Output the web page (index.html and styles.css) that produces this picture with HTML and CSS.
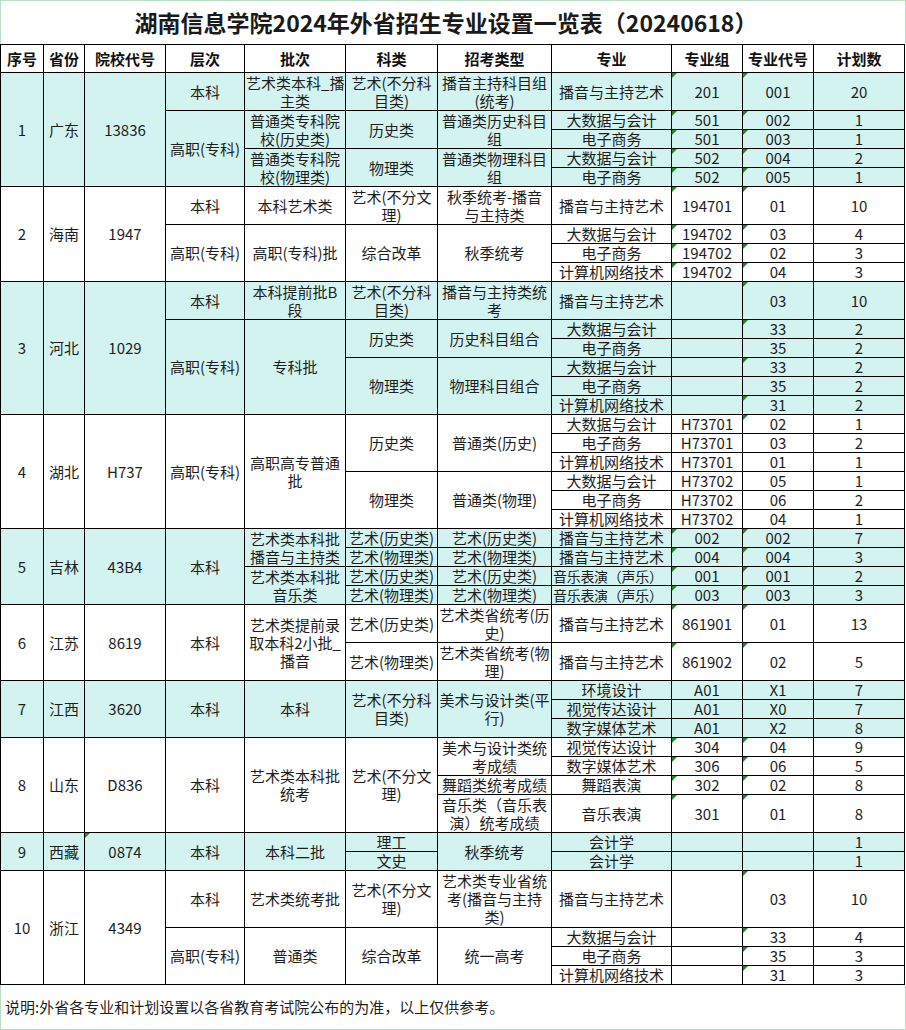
FILE: index.html
```html
<!DOCTYPE html>
<html lang="zh-CN">
<head>
<meta charset="utf-8">
<title>湖南信息学院2024年外省招生专业设置一览表</title>
<link rel="stylesheet" href="styles.css">
</head>
<body>
<div class="sheet">
  <div class="title">湖南信息学院2024年外省招生专业设置一览表（20240618）</div>
  <table class="grid">
    <colgroup>
      <col class="w43"><col class="w41"><col class="w81"><col class="w79"><col class="w101"><col class="w92"><col class="w114"><col class="w120"><col class="w71"><col class="w71"><col class="w91">
    </colgroup>
    <thead>
      <tr class="hd"><th>序号</th><th>省份</th><th>院校代号</th><th>层次</th><th>批次</th><th>科类</th><th>招考类型</th><th>专业</th><th>专业组</th><th>专业代号</th><th>计划数</th></tr>
    </thead>
    <tbody class="cy">
      <tr><td rowspan="6">1</td><td rowspan="6">广东</td><td rowspan="6">13836</td><td rowspan="2">本科</td><td rowspan="2">艺术类本科_播<br>主类</td><td rowspan="2">艺术(不分科<br>目类)</td><td rowspan="2">播音主持科目组<br>(统考)</td><td rowspan="2">播音与主持艺术</td><td rowspan="2" class="t">201</td><td rowspan="2" class="t">001</td><td rowspan="2">20</td></tr>
      <tr></tr>
      <tr><td rowspan="4">高职(专科)</td><td rowspan="2">普通类专科院<br>校(历史类)</td><td rowspan="2">历史类</td><td rowspan="2">普通类历史科目<br>组</td><td>大数据与会计</td><td class="t">501</td><td class="t">002</td><td>1</td></tr>
      <tr><td>电子商务</td><td class="t">501</td><td class="t">003</td><td>1</td></tr>
      <tr><td rowspan="2">普通类专科院<br>校(物理类)</td><td rowspan="2">物理类</td><td rowspan="2">普通类物理科目<br>组</td><td>大数据与会计</td><td class="t">502</td><td class="t">004</td><td>2</td></tr>
      <tr><td>电子商务</td><td class="t">502</td><td class="t">005</td><td>1</td></tr>
    </tbody>
    <tbody>
      <tr><td rowspan="5">2</td><td rowspan="5">海南</td><td rowspan="5">1947</td><td rowspan="2">本科</td><td rowspan="2">本科艺术类</td><td rowspan="2">艺术(不分文<br>理)</td><td rowspan="2">秋季统考-播音<br>与主持类</td><td rowspan="2">播音与主持艺术</td><td rowspan="2" class="t">194701</td><td rowspan="2" class="t">01</td><td rowspan="2">10</td></tr>
      <tr></tr>
      <tr><td rowspan="3">高职(专科)</td><td rowspan="3">高职(专科)批</td><td rowspan="3">综合改革</td><td rowspan="3">秋季统考</td><td>大数据与会计</td><td class="t">194702</td><td class="t">03</td><td>4</td></tr>
      <tr><td>电子商务</td><td class="t">194702</td><td class="t">02</td><td>3</td></tr>
      <tr><td>计算机网络技术</td><td class="t">194702</td><td class="t">04</td><td>3</td></tr>
    </tbody>
    <tbody class="cy">
      <tr><td rowspan="7">3</td><td rowspan="7">河北</td><td rowspan="7">1029</td><td rowspan="2">本科</td><td rowspan="2">本科提前批B<br>段</td><td rowspan="2">艺术(不分科<br>目类)</td><td rowspan="2">播音与主持类统<br>考</td><td rowspan="2">播音与主持艺术</td><td rowspan="2"></td><td rowspan="2" class="t">03</td><td rowspan="2">10</td></tr>
      <tr></tr>
      <tr><td rowspan="5">高职(专科)</td><td rowspan="5">专科批</td><td rowspan="2">历史类</td><td rowspan="2">历史科目组合</td><td>大数据与会计</td><td></td><td class="t">33</td><td>2</td></tr>
      <tr><td>电子商务</td><td></td><td>35</td><td>2</td></tr>
      <tr><td rowspan="3">物理类</td><td rowspan="3">物理科目组合</td><td>大数据与会计</td><td></td><td class="t">33</td><td>2</td></tr>
      <tr><td>电子商务</td><td></td><td>35</td><td>2</td></tr>
      <tr><td>计算机网络技术</td><td></td><td class="t">31</td><td>2</td></tr>
    </tbody>
    <tbody>
      <tr><td rowspan="6">4</td><td rowspan="6">湖北</td><td rowspan="6">H737</td><td rowspan="6">高职(专科)</td><td rowspan="6">高职高专普通<br>批</td><td rowspan="3">历史类</td><td rowspan="3">普通类(历史)</td><td>大数据与会计</td><td>H73701</td><td class="t">02</td><td>1</td></tr>
      <tr><td>电子商务</td><td>H73701</td><td>03</td><td>2</td></tr>
      <tr><td>计算机网络技术</td><td>H73701</td><td>01</td><td>1</td></tr>
      <tr><td rowspan="3">物理类</td><td rowspan="3">普通类(物理)</td><td>大数据与会计</td><td>H73702</td><td>05</td><td>1</td></tr>
      <tr><td>电子商务</td><td>H73702</td><td>06</td><td>2</td></tr>
      <tr><td>计算机网络技术</td><td>H73702</td><td>04</td><td>1</td></tr>
    </tbody>
    <tbody class="cy">
      <tr><td rowspan="4">5</td><td rowspan="4">吉林</td><td rowspan="4">43B4</td><td rowspan="4">本科</td><td rowspan="2">艺术类本科批<br>播音与主持类</td><td>艺术(历史类)</td><td>艺术(历史类)</td><td>播音与主持艺术</td><td class="t">002</td><td class="t">002</td><td>7</td></tr>
      <tr><td>艺术(物理类)</td><td>艺术(物理类)</td><td>播音与主持艺术</td><td class="t">004</td><td class="t">004</td><td>3</td></tr>
      <tr><td rowspan="2">艺术类本科批<br>音乐类</td><td>艺术(历史类)</td><td>艺术(历史类)</td><td class="tight">音乐表演（声乐）</td><td class="t">001</td><td class="t">001</td><td>2</td></tr>
      <tr><td>艺术(物理类)</td><td>艺术(物理类)</td><td class="tight">音乐表演（声乐）</td><td class="t">003</td><td class="t">003</td><td>3</td></tr>
    </tbody>
    <tbody>
      <tr><td rowspan="4">6</td><td rowspan="4">江苏</td><td rowspan="4">8619</td><td rowspan="4">本科</td><td rowspan="4">艺术类提前录<br>取本科2小批_<br>播音</td><td rowspan="2">艺术(历史类)</td><td rowspan="2">艺术类省统考(历<br>史)</td><td rowspan="2">播音与主持艺术</td><td rowspan="2" class="t">861901</td><td rowspan="2" class="t">01</td><td rowspan="2">13</td></tr>
      <tr></tr>
      <tr><td rowspan="2">艺术(物理类)</td><td rowspan="2">艺术类省统考(物<br>理)</td><td rowspan="2">播音与主持艺术</td><td rowspan="2" class="t">861902</td><td rowspan="2" class="t">02</td><td rowspan="2">5</td></tr>
      <tr></tr>
    </tbody>
    <tbody class="cy">
      <tr><td rowspan="3">7</td><td rowspan="3">江西</td><td rowspan="3">3620</td><td rowspan="3">本科</td><td rowspan="3">本科</td><td rowspan="3">艺术(不分科<br>目类)</td><td rowspan="3">美术与设计类(平<br>行)</td><td>环境设计</td><td>A01</td><td>X1</td><td>7</td></tr>
      <tr><td>视觉传达设计</td><td>A01</td><td>X0</td><td>7</td></tr>
      <tr><td>数字媒体艺术</td><td>A01</td><td>X2</td><td>8</td></tr>
    </tbody>
    <tbody>
      <tr><td rowspan="5">8</td><td rowspan="5">山东</td><td rowspan="5">D836</td><td rowspan="5">本科</td><td rowspan="5">艺术类本科批<br>统考</td><td rowspan="5">艺术(不分文<br>理)</td><td rowspan="2">美术与设计类统<br>考成绩</td><td>视觉传达设计</td><td class="t">304</td><td class="t">04</td><td>9</td></tr>
      <tr><td>数字媒体艺术</td><td class="t">306</td><td class="t">06</td><td>5</td></tr>
      <tr><td>舞蹈类统考成绩</td><td>舞蹈表演</td><td class="t">302</td><td class="t">02</td><td>8</td></tr>
      <tr><td rowspan="2">音乐类（音乐表<br>演）统考成绩</td><td rowspan="2">音乐表演</td><td rowspan="2" class="t">301</td><td rowspan="2" class="t">01</td><td rowspan="2">8</td></tr>
      <tr></tr>
    </tbody>
    <tbody class="cy">
      <tr><td rowspan="2">9</td><td rowspan="2">西藏</td><td rowspan="2" class="t">0874</td><td rowspan="2">本科</td><td rowspan="2">本科二批</td><td>理工</td><td rowspan="2">秋季统考</td><td>会计学</td><td></td><td></td><td>1</td></tr>
      <tr><td>文史</td><td>会计学</td><td></td><td></td><td>1</td></tr>
    </tbody>
    <tbody>
      <tr><td rowspan="6">10</td><td rowspan="6">浙江</td><td rowspan="6">4349</td><td rowspan="3">本科</td><td rowspan="3">艺术类统考批</td><td rowspan="3">艺术(不分文<br>理)</td><td rowspan="3">艺术类专业省统<br>考(播音与主持<br>类)</td><td rowspan="3">播音与主持艺术</td><td rowspan="3"></td><td rowspan="3" class="t">03</td><td rowspan="3">10</td></tr>
      <tr></tr>
      <tr></tr>
      <tr><td rowspan="3">高职(专科)</td><td rowspan="3">普通类</td><td rowspan="3">综合改革</td><td rowspan="3">统一高考</td><td>大数据与会计</td><td></td><td class="t">33</td><td>4</td></tr>
      <tr><td>电子商务</td><td></td><td class="t">35</td><td>3</td></tr>
      <tr><td>计算机网络技术</td><td></td><td class="t">31</td><td>3</td></tr>
    </tbody>
  </table>
  <div class="note">说明:外省各专业和计划设置以各省教育考试院公布的为准，以上仅供参考。</div>
</div>
</body>
</html>
```
FILE: styles.css
```css
html, body {
  margin: 0;
  padding: 0;
  background: #ffffff;
}
body {
  font-family: "Noto Sans CJK SC", "Noto Sans", sans-serif;
  color: #1e1e1e;
}
.sheet {
  width: 906px;
}
.title {
  box-sizing: border-box;
  height: 44px;
  border: 1px solid #b8dfc3;
  border-bottom: none;
  text-align: center;
  font-size: 23px;
  font-weight: bold;
  line-height: 42px;
  color: #1a1a1a;
  padding-right: 14px;
}
.grid {
  border-collapse: collapse;
  table-layout: fixed;
  width: 905px;
}
.w43 { width: 43px; }
.w41 { width: 41px; }
.w81 { width: 81px; }
.w79 { width: 79px; }
.w101 { width: 101px; }
.w92 { width: 92px; }
.w114 { width: 114px; }
.w120 { width: 120px; }
.w71 { width: 71px; }
.w91 { width: 91px; }
.grid th,
.grid td {
  border: 1px solid #000;
  padding: 0 1px;
  text-align: center;
  vertical-align: middle;
  font-size: 15px;
  line-height: 18px;
  white-space: nowrap;
  overflow: hidden;
  position: relative;
}
.grid th {
  font-weight: bold;
  color: #111;
}
.grid tr {
  height: 19px;
}
.grid tr.hd {
  height: 28px;
}
.cy td {
  background: #d3f3f1;
}
.grid td.t::before {
  content: "";
  position: absolute;
  left: 0;
  top: 0;
  width: 0;
  height: 0;
  border-top: 5px solid #1f8a23;
  border-right: 5px solid transparent;
}
.grid td.tight {
  text-align: left;
  font-size: 14px;
  letter-spacing: -0.3px;
}
.note {
  box-sizing: border-box;
  height: 45px;
  border: 1px solid #b8dfc3;
  border-top: none;
  padding-left: 4px;
  font-size: 15px;
  line-height: 44px;
  color: #1e1e1e;
}
```
